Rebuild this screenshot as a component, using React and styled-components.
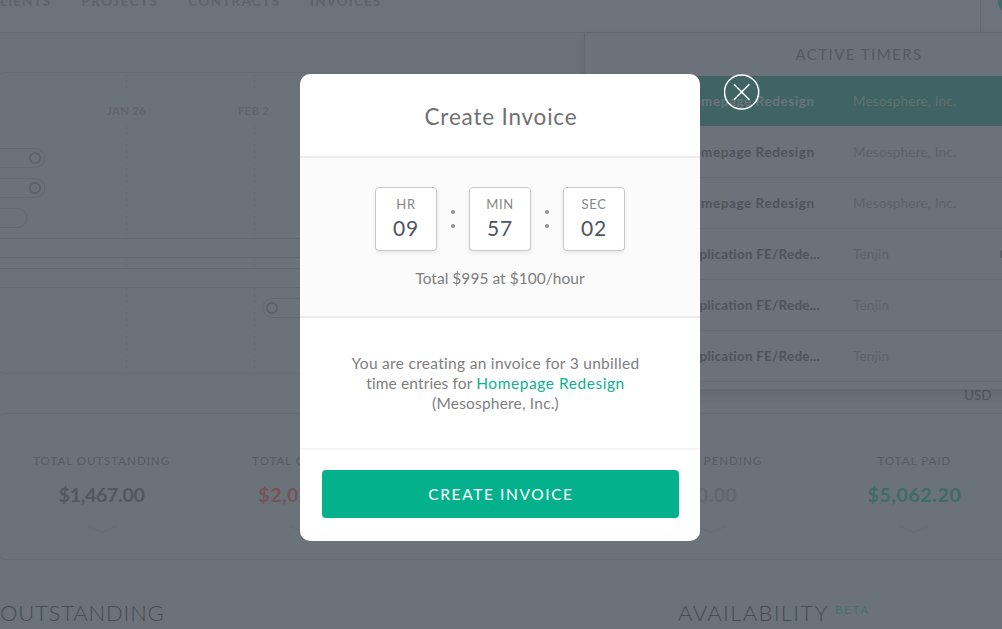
import React from "react";
import styled, { createGlobalStyle } from "styled-components";

const GlobalStyle = createGlobalStyle`
  * {
    box-sizing: border-box;
  }
  body {
    margin: 0;
    overflow: hidden;
    background: #6b7279;
    font-family: Lato, "Open Sans", sans-serif;
    font-kerning: normal;
  }
`;

const Page = styled.div`
  position: relative;
  width: 1002px;
  height: 629px;
  overflow: hidden;
  background: #6b7279;
`;

const Header = styled.header`
  display: flex;
  justify-content: space-between;
  height: 33px;
  border-bottom: 1px solid #646b73;
  background: #6c737b;
`;

const Nav = styled.nav`
  display: flex;
  gap: 30px;
  margin-left: -10px;
  margin-top: -7px;
`;

const NavItem = styled.span`
  height: 16px;
  line-height: 16px;
  font-size: 13.5px;
  font-weight: 700;
  letter-spacing: ${(props) => props.$spacing}px;
  color: #5e646d;
`;

const HeaderSide = styled.div`
  width: 22px;
  height: 32px;
  padding-left: 17px;
  border-left: 1px solid #656c74;
  overflow: hidden;
`;

const TimerButton = styled.div`
  width: 26px;
  height: 26px;
  margin-top: -12px;
  border-radius: 50%;
  background: #3f6b69;
`;

const Timeline = styled.section`
  width: 1010px;
  height: 302px;
  margin: 39px 0 0 -3px;
  border: 1px solid #666d75;
  border-radius: 8px;
  background: #6b737a;
`;

const Toolbar = styled.div`
  display: flex;
  justify-content: flex-end;
  height: 39px;
  padding: 12px 0 0;
`;

const Currency = styled.span`
  width: 38px;
  height: 18px;
  line-height: 18px;
  font-size: 13.5px;
  color: #50565f;
`;

const Stats = styled.section`
  display: flex;
  width: 1018px;
  height: 147px;
  margin-left: -1px;
  border: 1px solid #656c74;
  border-radius: 6px;
`;

const Stat = styled.div`
  flex: 1;
  display: flex;
  flex-direction: column;
  align-items: center;
  padding-top: 39px;
`;

const StatLabel = styled.div`
  height: 16px;
  line-height: 16px;
  font-size: 11.5px;
  letter-spacing: 1px;
  white-space: nowrap;
  color: #565d66;
`;

const StatAmount = styled.div`
  height: 26px;
  margin: 13px 0 17px;
  line-height: 26px;
  font-size: 19.5px;
  font-weight: 700;
  letter-spacing: ${(props) => props.$spacing}px;
  color: ${(props) => props.$color};
`;

const Headings = styled.div`
  display: flex;
  height: 70px;
  padding-top: 39px;
`;

const Heading = styled.h2`
  width: ${(props) => props.$width || "auto"};
  margin: 0;
  line-height: 28px;
  font-size: 22px;
  font-weight: 300;
  letter-spacing: ${(props) => props.$spacing}px;
  color: #454c55;
`;

const Beta = styled.span`
  margin: 4px 0 0 6px;
  height: 14px;
  line-height: 14px;
  font-size: 11.5px;
  letter-spacing: 1.8px;
  color: #43736f;
`;

/* Dropdown lying over the dashboard */
const TimersMenu = styled.aside`
  position: absolute;
  top: 32px;
  left: 584px;
  width: 550px;
  height: 358px;
  border: 1px solid #5f666e;
  border-bottom-color: #646b72;
  background: #6b7279;
  box-shadow: 0 5px 9px -1px rgba(50, 56, 66, 0.18);
`;

const MenuTitle = styled.div`
  height: 43px;
  line-height: 43px;
  text-align: center;
  font-size: 15px;
  letter-spacing: 1.45px;
  color: #535a63;
`;

const TimerRow = styled.div`
  display: flex;
  height: 51px;
  line-height: 50px;
  padding-left: 97px;
  border-bottom: 1px solid ${(props) => (props.$active ? "#6c737a" : "#646b73")};
  background: ${(props) => (props.$active ? "#3f6463" : "transparent")};
  white-space: nowrap;
  font-size: 13.5px;
`;

const TimerName = styled.span`
  width: 171px;
  font-weight: 700;
  letter-spacing: ${(props) => props.$spacing}px;
  color: ${(props) => (props.$active ? "#6b737b" : "#4d545d")};
`;

const TimerClient = styled.span`
  width: 147px;
  letter-spacing: 0.2px;
  color: ${(props) => (props.$active ? "#62716f" : "#5c636a")};
`;

const TimerTime = styled.span`
  color: #4d545d;
`;

const Overlay = styled.div`
  position: absolute;
  inset: 0;
  display: flex;
  align-items: flex-start;
  padding: 74px 0 0 300px;
`;

const Modal = styled.div`
  width: 400px;
  height: 467px;
  border-radius: 10px;
  background: #fff;
  overflow: hidden;
`;

const ModalTitle = styled.h1`
  height: 84px;
  margin: 0;
  border-bottom: 2px solid #ededee;
  line-height: 86px;
  text-align: center;
  font-size: 22.5px;
  font-weight: 400;
  letter-spacing: 0.8px;
  text-indent: 2px;
  color: #707071;
`;

const ClockPanel = styled.div`
  height: 160px;
  padding-top: 29px;
  border-bottom: 2px solid #ebebec;
  background: #fbfbfb;
`;

const Clock = styled.div`
  display: flex;
  justify-content: center;
`;

const ClockBox = styled.div`
  display: flex;
  flex-direction: column;
  align-items: center;
  width: 62px;
  height: 64px;
  padding-top: 7px;
  border: 1px solid #c9c9ca;
  border-radius: 4px;
  background: #fff;
  box-shadow: 0 2px 4px rgba(0, 0, 0, 0.08);
`;

const ClockUnit = styled.span`
  height: 18px;
  line-height: 18px;
  font-size: 13px;
  letter-spacing: 0.7px;
  color: #868788;
`;

const ClockValue = styled.span`
  height: 28px;
  line-height: 30px;
  font-size: 21px;
  letter-spacing: 0.8px;
  color: #4e555f;
`;

const Colon = styled.div`
  display: flex;
  flex-direction: column;
  align-items: center;
  gap: 10px;
  width: 32px;
  padding-top: 23px;
`;

const Dot = styled.i`
  width: 4px;
  height: 4px;
  border-radius: 50%;
  background: #8e8f90;
`;

const Total = styled.div`
  margin-top: 17px;
  line-height: 20px;
  text-align: center;
  font-size: 15.5px;
  letter-spacing: 0.03px;
  color: #7e7e7f;
`;

const Message = styled.div`
  height: 132px;
  padding: 35px 9px 0 0;
  border-bottom: 2px solid #f5f5f6;
  text-align: center;
  line-height: 20px;
  font-size: 15.5px;
  color: #7e7e7f;
`;

const Line = styled.div`
  letter-spacing: ${(props) => props.$spacing}px;
`;

const Project = styled.span`
  letter-spacing: 0.55px;
  color: #0eb28c;
`;

const SubmitButton = styled.button`
  display: block;
  width: 357px;
  height: 48px;
  margin: 20px 0 0 22px;
  padding: 0 0 0 1px;
  border: 0;
  border-radius: 4px;
  background: #03b28c;
  font-family: inherit;
  font-size: 15.5px;
  letter-spacing: 1.6px;
  color: #fff;
`;

const CloseButton = styled.button`
  width: 36px;
  height: 36px;
  margin-left: 24px;
  padding: 0;
  border: 0;
  background: transparent;
`;

const navItems = [
  { label: "CLIENTS", spacing: 1.1 },
  { label: "PROJECTS", spacing: 1.5 },
  { label: "CONTRACTS", spacing: 1.25 },
  { label: "INVOICES", spacing: 1.1 },
];

const stats = [
  { label: "TOTAL OUTSTANDING", amount: "$1,467.00", color: "#505760", spacing: -0.3 },
  { label: "TOTAL OVERDUE", amount: "$2,020.00", color: "#755358", spacing: 0.5 },
  {},
  { label: "TOTAL PENDING", amount: "$0.00", color: "#60676e", spacing: 0.5 },
  { label: "TOTAL PAID", amount: "$5,062.20", color: "#3d6b67", spacing: 0.6 },
];

const timers = [
  { name: "Homepage Redesign", client: "Mesosphere, Inc.", active: true },
  { name: "Homepage Redesign", client: "Mesosphere, Inc." },
  { name: "Homepage Redesign", client: "Mesosphere, Inc." },
  { name: "Application FE/Rede...", client: "Tenjin", time: "02:10" },
  { name: "Application FE/Rede...", client: "Tenjin" },
  { name: "Application FE/Rede...", client: "Tenjin" },
];

const clock = [
  { unit: "HR", value: "09" },
  { unit: "MIN", value: "57" },
  { unit: "SEC", value: "02" },
];

const TimelineChart = () => (
  <svg width="1006" height="300" viewBox="-2 73 1006 300" fill="none">
    <g stroke="#656c74" strokeDasharray="3 3">
      {[126.5, 254.5].map((x) => (
        <path key={x} d={`M${x} 74V93M${x} 126V236M${x} 258V267M${x} 288V372`} />
      ))}
    </g>
    <g
      fill="#5e656d"
      fontSize="11.5"
      fontWeight="700"
      textAnchor="middle"
      letterSpacing="0.2"
    >
      <text x="126.5" y="115">
        JAN 26
      </text>
      <text x="253.5" y="115">
        FEB 2
      </text>
    </g>
    <g stroke="#626970">
      <rect x="-30" y="148.5" width="75" height="19" rx="9.5" />
      <rect x="-30" y="178.5" width="75" height="19" rx="9.5" />
      <rect x="-30" y="208.5" width="57" height="19" rx="9.5" />
      <path d="M-2 238.5H1004M-2 257.5H1004M-2 268.5H1004M-2 287.5H1004" />
      <rect x="262.5" y="298.5" width="200" height="19" rx="9.5" stroke="#606974" />
    </g>
    <g stroke="#5a6168" strokeWidth="1.7">
      <circle cx="35" cy="158" r="5.2" />
      <circle cx="35" cy="188" r="5.2" />
      <circle cx="272" cy="308" r="5.2" />
    </g>
  </svg>
);

const Chevron = () => (
  <svg width="32" height="9" viewBox="0 0 32 9" fill="none">
    <path d="M1 1L16 7.5L31 1" stroke="#666d74" />
  </svg>
);

const TimersDropdown = () => (
  <TimersMenu>
    <MenuTitle>ACTIVE TIMERS</MenuTitle>
    {timers.map((timer, i) => (
      <TimerRow key={i} $active={timer.active}>
        <TimerName
          $active={timer.active}
          $spacing={timer.client === "Tenjin" ? 0.2 : 0.57}
        >
          {timer.name}
        </TimerName>
        <TimerClient $active={timer.active}>{timer.client}</TimerClient>
        {timer.time && <TimerTime>{timer.time}</TimerTime>}
      </TimerRow>
    ))}
  </TimersMenu>
);

const InvoiceModal = () => (
  <Overlay>
    <Modal>
      <ModalTitle>Create Invoice</ModalTitle>
      <ClockPanel>
        <Clock>
          {clock.map(({ unit, value }, i) => (
            <React.Fragment key={unit}>
              {i > 0 && (
                <Colon>
                  <Dot />
                  <Dot />
                </Colon>
              )}
              <ClockBox>
                <ClockUnit>{unit}</ClockUnit>
                <ClockValue>{value}</ClockValue>
              </ClockBox>
            </React.Fragment>
          ))}
        </Clock>
        <Total>Total $995 at $100/hour</Total>
      </ClockPanel>
      <Message>
        <Line $spacing={0.3}>You are creating an invoice for 3 unbilled</Line>
        <Line $spacing={0.12}>
          time entries for <Project>Homepage Redesign</Project>
        </Line>
        <Line $spacing={0.2}>(Mesosphere, Inc.)</Line>
      </Message>
      <SubmitButton>CREATE INVOICE</SubmitButton>
    </Modal>
    <CloseButton aria-label="Close">
      <svg width="36" height="36" viewBox="0 0 36 36" fill="none" stroke="#fff">
        <circle cx="17.6" cy="18" r="17.1" strokeWidth="1.5" />
        <path d="M10 10.2L25.4 25.8M25.4 10.2L10 25.8" strokeWidth="1.5" />
      </svg>
    </CloseButton>
  </Overlay>
);

const App = () => {
  return (
    <Page>
      <GlobalStyle />
      <Header>
        <Nav>
          {navItems.map((item) => (
            <NavItem key={item.label} $spacing={item.spacing}>
              {item.label}
            </NavItem>
          ))}
        </Nav>
        <HeaderSide>
          <TimerButton />
        </HeaderSide>
      </Header>
      <Timeline>
        <TimelineChart />
      </Timeline>
      <Toolbar>
        <Currency>USD</Currency>
      </Toolbar>
      <Stats>
        {stats.map((stat, i) => (
          <Stat key={i}>
            {stat.label && (
              <>
                <StatLabel>{stat.label}</StatLabel>
                <StatAmount $color={stat.color} $spacing={stat.spacing}>
                  {stat.amount}
                </StatAmount>
                <Chevron />
              </>
            )}
          </Stat>
        ))}
      </Stats>
      <Headings>
        <Heading $width="678px" $spacing={0.85}>
          OUTSTANDING
        </Heading>
        <Heading $spacing={1.35}>AVAILABILITY</Heading>
        <Beta>BETA</Beta>
      </Headings>
      <TimersDropdown />
      <InvoiceModal />
    </Page>
  );
};

export default App;
